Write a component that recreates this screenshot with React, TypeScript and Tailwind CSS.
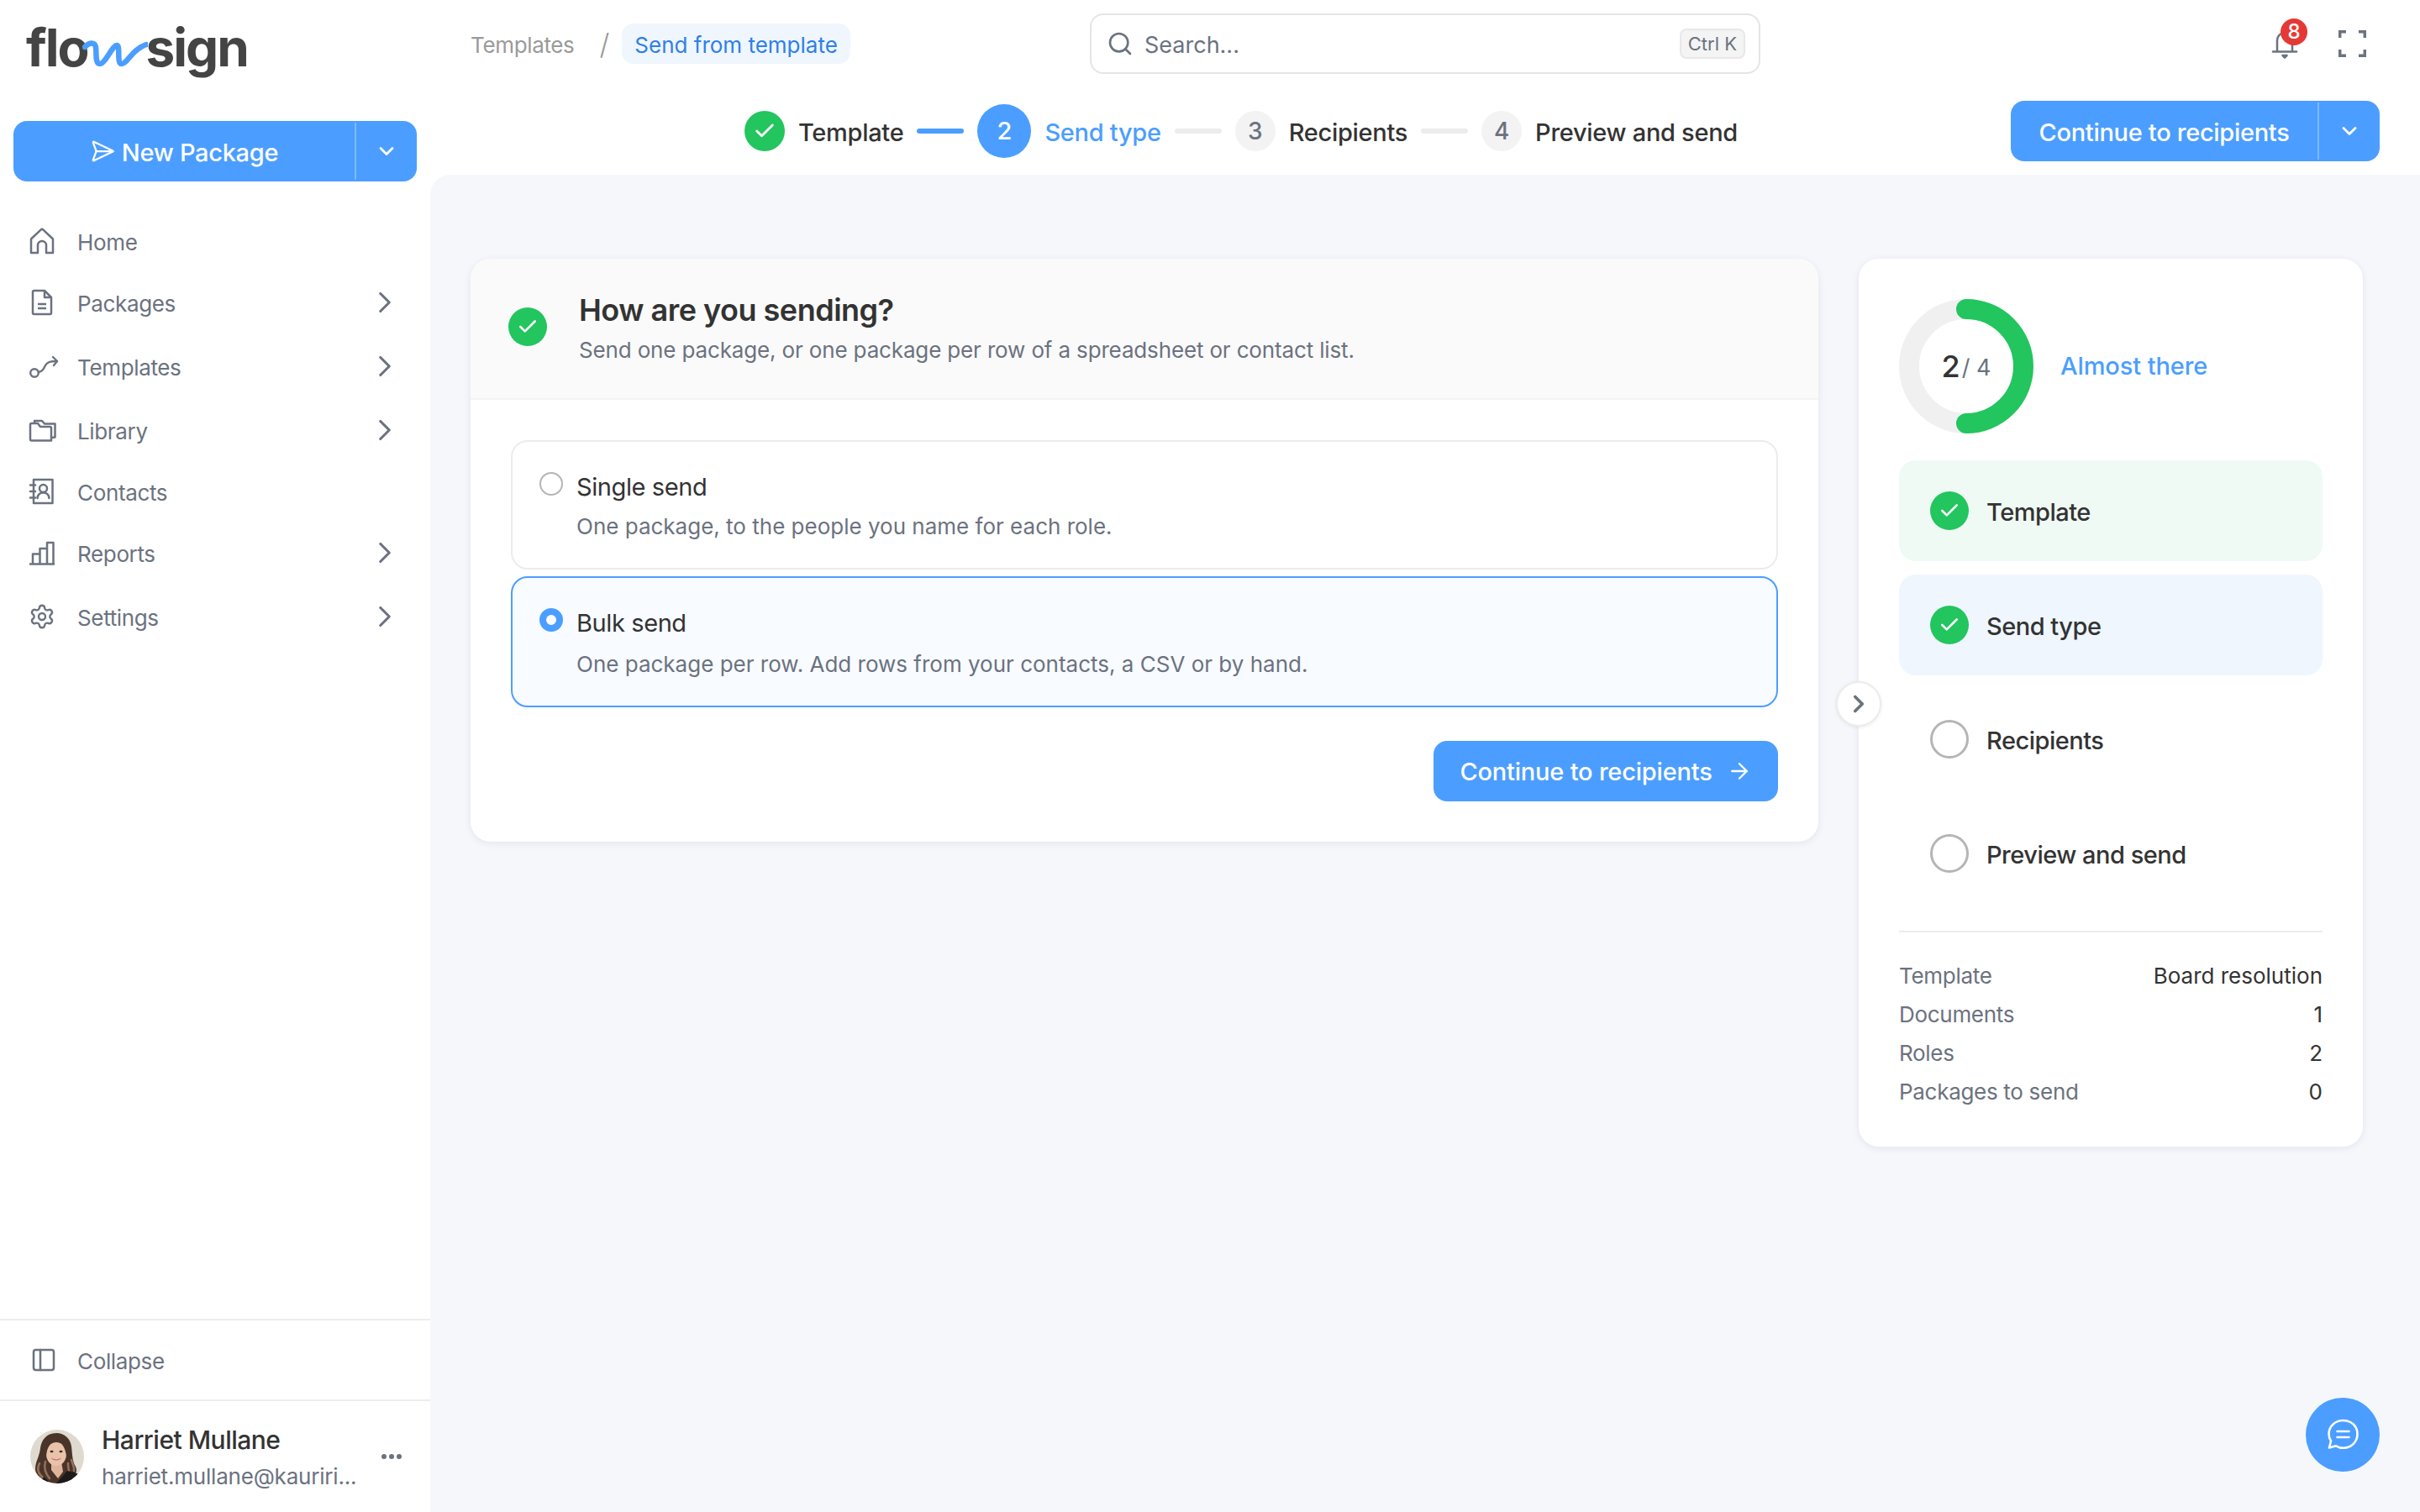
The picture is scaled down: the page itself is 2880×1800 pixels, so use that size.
import { ArrowRight, Check, ChevronDown, ChevronRight, PanelLeft, Search, SendHorizontal, Settings } from "lucide-react"
import type { ReactNode } from "react"

function HomeIcon() {
  return (
    <svg width="32" height="32" viewBox="0 0 32 32" fill="none" stroke="#6b7280" strokeWidth="2.5" strokeLinejoin="round">
      <path d="M3 13.5 14.5 2.6a2.2 2.2 0 0 1 3 0L29 13.5V30H21V21a5 5 0 0 0-10 0v9H3Z" />
    </svg>
  )
}

function PackageIcon() {
  return (
    <svg width="32" height="32" viewBox="0 0 32 32" fill="none" stroke="#6b7280" strokeWidth="2.5" strokeLinejoin="round">
      <path d="M5 3.5A1.5 1.5 0 0 1 6.500 2H19l8 8v18.500a1.500 1.500 0 0 1-1.500 1.500H6.500A1.500 1.500 0 0 1 5 28.500Z" />
      <path d="M19 2v8h8M11 18h10M11 23h10" />
    </svg>
  )
}

function RouteIcon() {
  return (
    <svg width="36" height="32" viewBox="0 0 36 32" fill="none" stroke="#6b7280" strokeWidth="2.4" strokeLinecap="round" strokeLinejoin="round">
      <circle cx="7" cy="24" r="4.800" />
      <path d="M12 23c5-1 6-4 8-8 2-3.500 5-5 14-5" />
      <path d="M29 5l5 5-4 5" />
    </svg>
  )
}

function FolderIcon() {
  return (
    <svg width="34" height="32" viewBox="0 0 34 32" fill="none" stroke="#6b7280" strokeWidth="2.5" strokeLinejoin="round">
      <path d="M2 9.500A1.500 1.500 0 0 1 3.500 8H11l3 4h11.500A1.500 1.500 0 0 1 27 13.500V28.500H3.500A1.500 1.500 0 0 1 2 27Z" />
      <path d="M7 8V5h9l3 3.500h12.500V24.500L27 25" />
    </svg>
  )
}

function ContactsIcon() {
  return (
    <svg width="32" height="32" viewBox="0 0 32 32" fill="none" stroke="#6b7280" strokeWidth="2.5" strokeLinecap="round" strokeLinejoin="round">
      <path d="M6 2h22.500v28H6Z" />
      <path d="M2 8.500h6M2 16h6M2 23.500h6" />
      <circle cx="17.500" cy="12.500" r="4.500" />
      <path d="M10.500 24c.5-4 3-6.500 7-6.500s6.500 2.500 7 6.500" />
    </svg>
  )
}

function BarsIcon() {
  return (
    <svg width="32" height="32" viewBox="0 0 32 32" fill="none" stroke="#6b7280" strokeWidth="2.5" strokeLinejoin="round">
      <path d="M1 29.500h30M5 29V17.500h8.500V29M13.500 29V11h8.500V29M22 29V4h7.500v25" />
    </svg>
  )
}

function BellIcon() {
  return (
    <svg width="32" height="38" viewBox="0 0 32 38" fill="none" stroke="#6b7280" strokeWidth="2.5" strokeLinecap="round" strokeLinejoin="round">
      <path d="M7 27V15a9 9 0 0 1 18 0v12" />
      <path d="M2 28.500h28" />
      <path d="M13.500 33h5l-2.500 2.500Z" fill="#6b7280" />
    </svg>
  )
}

function FullscreenIcon() {
  return (
    <svg width="33" height="32" viewBox="0 0 33 32" fill="none" stroke="#6b7280" strokeWidth="3.500">
      <path d="M1.700 9V1.700H9M24 1.700h7.300V9M31.300 23v7.300H24M9 30.300H1.700V23" />
    </svg>
  )
}

function ChatIcon() {
  return (
    <svg width="38" height="38" viewBox="0 0 38 38" fill="none" stroke="#ffffff" strokeWidth="2.600" strokeLinecap="round" strokeLinejoin="round">
      <path d="M19.500 2C10.500 2 2.500 8.500 2.500 18c0 3.500 1 6 2.500 8.500l-2 8 8-2.200c2.500 1.500 5.500 2.500 8.500 2.500 9.500 0 17-7 17-16.800S28.500 2 19.500 2Z" />
      <path d="M12.500 15h14M12.500 22h14" />
    </svg>
  )
}

function LogoWave() {
  return (
    <svg width="78" height="34" viewBox="0 0 78 34" fill="none" stroke="#4b9eff" strokeWidth="6.500" strokeLinecap="round" strokeLinejoin="round" className="relative -ml-[7px] -mr-[2px] mt-[25px] shrink-0">
      <path d="M3 10C7 5 15 3 16 10 17 18 15 30 21 30 27 30 36 8 41 8 46 8 40 30 47 30 53 30 60 12 76 7" />
    </svg>
  )
}

function Avatar() {
  return (
    <svg width="64" height="64" viewBox="0 0 64 64" className="shrink-0 rounded-full">
      <rect width="64" height="64" fill="#dedad0" />
      <path d="M31 4C19 4 13 13 12 22 11 32 6 38 6 47 6 54 14 60 22 64H44C53 57 57 50 54 44 50 38 50 28 49 20 48 11 41 4 31 4Z" fill="#4a342a" />
      <path d="M11 40c-3 6-2 12 4 17M18 38c-2 7 0 14 5 20M49 36c1 5 4 8 3 13M45 40c0 4 1 7 1 11" fill="none" stroke="#94705a" strokeWidth="2.500" strokeLinecap="round" />
      <path d="M25 38h12l2 12-6 8-8-10Z" fill="#e0b49c" />
      <ellipse cx="31" cy="29" rx="12" ry="14" fill="#e8c2a9" />
      <path d="M33 11C26 13 20 19 19 31 16 22 19 8 31 8 42 8 46 18 43 31 42 23 38 16 33 11Z" fill="#4a342a" />
      <path d="M31 64 44 49C50 50 58 52 62 56V64ZM24 64 16 56 12 64Z" fill="#1c1a1a" />
      <ellipse cx="25.500" cy="26" rx="2" ry="1.300" fill="#3b2a24" />
      <ellipse cx="36.500" cy="26" rx="2" ry="1.300" fill="#3b2a24" />
      <path d="M25 33.500c3 1.500 9 1.500 12 0-1 4-11 4-12 0Z" fill="#c9706f" />
      <path d="M26.500 34c2.500.8 6.500.8 9 0-1 1.500-8 1.500-9 0Z" fill="#f6eee9" />
    </svg>
  )
}

const navItems: { label: string; icon: ReactNode; hasChildren: boolean }[] = [
  { label: "Home", icon: <HomeIcon />, hasChildren: false },
  { label: "Packages", icon: <PackageIcon />, hasChildren: true },
  { label: "Templates", icon: <RouteIcon />, hasChildren: true },
  { label: "Library", icon: <FolderIcon />, hasChildren: true },
  { label: "Contacts", icon: <ContactsIcon />, hasChildren: false },
  { label: "Reports", icon: <BarsIcon />, hasChildren: true },
  { label: "Settings", icon: <Settings size={32} strokeWidth={1.8} color="#6b7280" />, hasChildren: true },
]

function SplitButton({ label, width, leading }: { label: string; width: string; leading?: ReactNode }) {
  return (
    <div className={`flex h-[72px] items-center rounded-[16px] bg-[#4b9eff] text-white ${width}`}>
      <div className="flex h-full flex-1 items-center justify-center gap-[8px] text-[29px] font-medium tracking-[-0.3px]">
        {leading}
        <span className="pt-[3px]">{label}</span>
      </div>
      <div className="h-[68px] w-[2px] bg-[#7db8ff]" />
      <div className="flex w-[72px] items-center justify-center">
        <ChevronDown size={28} strokeWidth={2.4} />
      </div>
    </div>
  )
}

function Sidebar() {
  return (
    <aside className="flex w-[512px] shrink-0 flex-col bg-white">
      <div className="flex h-[144px] items-start pl-[31px] pt-[21px] text-[62px] font-bold leading-[72px] tracking-[-2px] text-[#444444]">
        <span>flo</span>
        <LogoWave />
        <span className="relative">sign</span>
      </div>
      <div className="px-[16px]">
        <SplitButton label="New Package" width="w-[480px]" leading={<SendHorizontal size={30} strokeWidth={1.8} />} />
      </div>
      <nav className="mt-[36px] flex flex-col">
        {navItems.map((item) => (
          <div key={item.label} className={`flex items-center pl-[34px] pr-[33px] text-[26px] tracking-[-0.35px] text-[#6b7280] ${item.hasChildren ? "h-[76px]" : "h-[70px]"}`}>
            <span className="flex w-[58px] shrink-0 items-center">{item.icon}</span>
            <span className="flex-1 pt-[3px]">{item.label}</span>
            {item.hasChildren && <ChevronRight size={42} strokeWidth={1.8} color="#6b7280" />}
          </div>
        ))}
      </nav>
      <div className="flex-1" />
      <div className="flex h-[96px] items-center border-t-[2px] border-[#ededed] pl-[36px] text-[26px] tracking-[-0.35px] text-[#6b7280]">
        <span className="flex w-[56px]"><PanelLeft size={32} strokeWidth={1.9} /></span>
        <span className="pt-[3px]">Collapse</span>
      </div>
      <div className="flex h-[134px] items-center border-t-[2px] border-[#ededed] pl-[36px] pr-[34px]">
        <Avatar />
        <div className="ml-[21px] flex-1 pt-[2px]">
          <div className="text-[30px] font-medium leading-[38px] tracking-[-0.5px] text-[#333333]">Harriet Mullane</div>
          <div className="mt-[8px] text-[26px] leading-[34px] tracking-[-0.2px] text-[#6b7280]">harriet.mullane@kauriri...</div>
        </div>
        <div className="flex gap-[3px]">
          <span className="h-[6px] w-[6px] rounded-full bg-[#6b7280]" />
          <span className="h-[6px] w-[6px] rounded-full bg-[#6b7280]" />
          <span className="h-[6px] w-[6px] rounded-full bg-[#6b7280]" />
        </div>
      </div>
    </aside>
  )
}

function StepConnector({ active }: { active?: boolean }) {
  return <span className={`h-[6px] w-[56px] rounded-full ${active ? "bg-[#4b9eff]" : "bg-[#ececec]"}`} />
}

function GreenCheck({ size, icon }: { size: string; icon: number }) {
  return (
    <span className={`flex shrink-0 items-center justify-center rounded-full bg-[#22c55e] text-white ${size}`}>
      <Check size={icon} strokeWidth={2.4} />
    </span>
  )
}

function Stepper() {
  return (
    <div className="flex items-center gap-[16px] text-[29px] font-medium tracking-[-0.3px] text-[#333333]">
      <GreenCheck size="h-[48px] w-[48px]" icon={28} />
      <span className="pt-[3px]">Template</span>
      <StepConnector active />
      <span className="flex h-[64px] w-[64px] items-center justify-center rounded-full bg-[#4b9eff] text-white">2</span>
      <span className="pt-[3px] text-[#4b9eff]">Send type</span>
      <StepConnector />
      <span className="flex h-[48px] w-[48px] items-center justify-center rounded-full bg-[#f3f3f3] text-[28px] text-[#6b7280]">3</span>
      <span className="pt-[3px]">Recipients</span>
      <StepConnector />
      <span className="flex h-[48px] w-[48px] items-center justify-center rounded-full bg-[#f3f3f3] text-[28px] text-[#6b7280]">4</span>
      <span className="pt-[3px]">Preview and send</span>
    </div>
  )
}

function Header() {
  return (
    <header className="bg-white">
      <div className="flex h-[104px] items-center pl-[48px] pr-[64px]">
        <div className="flex w-[453px] items-center">
          <span className="pt-[3px] text-[26px] tracking-[-0.35px] text-[#9a9a9a]">Templates</span>
          <span className="ml-[30px] text-[34px] font-light text-[#9a9a9a]">/</span>
          <span className="ml-[15px] flex h-[48px] items-center rounded-[14px] bg-[#eff6fe] px-[15px] pt-[3px] text-[26px] text-[#2f7fe8]">Send from template</span>
        </div>
        <div className="ml-[284px] flex h-[72px] w-[798px] items-center rounded-[16px] border-[2px] border-[#e5e5e5] pl-[18px] pr-[16px]">
          <Search size={32} strokeWidth={2} color="#6b7280" />
          <span className="ml-[13px] flex-1 pt-[4px] text-[27px] text-[#6b7280]">Search...</span>
          <span className="flex h-[36px] items-center rounded-[8px] border-[2px] border-[#e8e8e8] bg-[#f4f4f4] px-[8px] text-[22px] text-[#6b7280]">Ctrl K</span>
        </div>
        <div className="ml-auto flex items-center gap-[48px]">
          <div className="relative flex h-[38px] w-[32px]">
            <BellIcon />
            <span className="absolute -top-[11px] left-[11px] flex h-[32px] w-[32px] items-center justify-center rounded-full bg-[#e53935] text-[24px] font-medium text-white">8</span>
          </div>
          <FullscreenIcon />
        </div>
      </div>
      <div className="flex h-[104px] items-center pl-[374px] pr-[48px]">
        <Stepper />
        <div className="ml-auto">
          <SplitButton label="Continue to recipients" width="w-[439px]" />
        </div>
      </div>
    </header>
  )
}

function SendOption({ title, description, selected }: { title: string; description: string; selected?: boolean }) {
  return (
    <div className={`flex gap-[16px] rounded-[20px] border-[2px] pl-[32px] pt-[36px] ${selected ? "h-[156px] border-[#4b9eff] bg-[#f8fbff]" : "h-[154px] border-[#ececec] bg-white"}`}>
      <span className={`h-[28px] w-[28px] shrink-0 rounded-full ${selected ? "border-[8px] border-[#4b9eff] bg-white" : "border-[2px] border-[#b5b5b5] bg-white"}`} />
      <div className="-mt-[1px]">
        <div className="text-[29px] leading-[38px] tracking-[-0.4px] text-[#333333]">{title}</div>
        <div className={`text-[26px] leading-[36px] text-[#6b7280] ${selected ? "mt-[12px]" : "mt-[10px]"}`}>{description}</div>
      </div>
    </div>
  )
}

function SendingCard() {
  return (
    <section className="w-[1604px] overflow-hidden rounded-[24px] bg-white shadow-[0_2px_10px_rgba(20,30,60,0.08)]">
      <div className="flex h-[168px] items-center gap-[38px] border-b-[2px] border-[#f3f3f3] bg-[#fafafa] pl-[45px]">
        <GreenCheck size="h-[46px] w-[46px] -mt-[4px]" icon={26} />
        <div>
          <div className="text-[36px] font-semibold leading-[44px] tracking-[-0.5px] text-[#333333]">How are you sending?</div>
          <div className="mt-[8px] text-[26px] leading-[36px] tracking-[-0.15px] text-[#6b7280]">Send one package, or one package per row of a spreadsheet or contact list.</div>
        </div>
      </div>
      <div className="flex flex-col p-[48px]">
        <SendOption title="Single send" description="One package, to the people you name for each role." />
        <div className="h-[8px]" />
        <SendOption title="Bulk send" description="One package per row. Add rows from your contacts, a CSV or by hand." selected />
        <div className="mt-[40px] flex justify-end">
          <div className="flex h-[72px] w-[410px] items-center justify-center gap-[17px] rounded-[16px] bg-[#4b9eff] text-[29px] font-medium tracking-[-0.2px] text-white">
            <span className="pt-[1px]">Continue to recipients</span>
            <ArrowRight size={30} strokeWidth={1.9} />
          </div>
        </div>
      </div>
    </section>
  )
}

const progressRows = [
  { label: "Template", done: true, bg: "bg-[#f0faf5]" },
  { label: "Send type", done: true, bg: "bg-[#eff6fe]" },
  { label: "Recipients", done: false, bg: "" },
  { label: "Preview and send", done: false, bg: "" },
]

const summaryRows = [
  ["Template", "Board resolution"],
  ["Documents", "1"],
  ["Roles", "2"],
  ["Packages to send", "0"],
]

function ProgressCard() {
  return (
    <section className="relative w-[600px] rounded-[24px] bg-white px-[48px] pb-[43px] pt-[48px] shadow-[0_2px_10px_rgba(20,30,60,0.08)]">
      <button className="absolute -left-[27px] top-[503px] flex h-[54px] w-[54px] items-center justify-center rounded-full border-[2px] border-[#ececec] bg-white text-[#6b7280] shadow-[0_1px_4px_rgba(0,0,0,0.08)]">
        <ChevronRight size={34} strokeWidth={2.6} />
      </button>
      <div className="flex items-center gap-[32px]">
        <div className="relative flex h-[160px] w-[160px] items-center justify-center">
          <svg width="160" height="160" viewBox="0 0 160 160" fill="none" className="absolute inset-0">
            <circle cx="80" cy="80" r="68" stroke="#f0f0f0" strokeWidth="24" />
            <path d="M80 12a68 68 0 0 1 0 136" stroke="#22c55e" strokeWidth="24" strokeLinecap="round" />
          </svg>
          <span className="relative text-[36px] font-medium text-[#333333]">2</span>
          <span className="relative ml-[2px] mt-[4px] text-[27px] text-[#6b7280]">/ 4</span>
        </div>
        <span className="text-[29px] font-medium tracking-[-0.1px] text-[#4b9eff]">Almost there</span>
      </div>
      <div className="mt-[32px] flex flex-col gap-[16px]">
        {progressRows.map((row) => (
          <div key={row.label} className={`flex h-[120px] items-center gap-[21px] rounded-[20px] pl-[37px] ${row.bg}`}>
            {row.done ? (
              <GreenCheck size="h-[46px] w-[46px]" icon={26} />
            ) : (
              <span className="h-[46px] w-[46px] rounded-full border-[3px] border-[#b5b5b5]" />
            )}
            <span className="pt-[4px] text-[29px] font-medium tracking-[-0.5px] text-[#333333]">{row.label}</span>
          </div>
        ))}
      </div>
      <div className="mt-[32px] border-t-[2px] border-[#ececec] pt-[28px]">
        {summaryRows.map(([label, value]) => (
          <div key={label} className="flex h-[46px] items-center justify-between text-[26px]">
            <span className="tracking-[-0.3px] text-[#6b7280]">{label}</span>
            <span className="text-[#333333]">{value}</span>
          </div>
        ))}
      </div>
    </section>
  )
}

export default function App() {
  return (
    <div className="flex h-[1800px] w-[2880px] overflow-hidden bg-white [font-family:Inter,sans-serif]">
      <Sidebar />
      <div className="flex min-w-0 flex-1 flex-col">
        <Header />
        <main className="relative flex flex-1 items-start gap-[48px] rounded-tl-[24px] bg-[#f5f7fb] pl-[48px] pt-[100px]">
          <SendingCard />
          <ProgressCard />
          <button className="absolute bottom-[48px] right-[48px] flex h-[88px] w-[88px] items-center justify-center rounded-full bg-[#4b9eff]">
            <ChatIcon />
          </button>
        </main>
      </div>
    </div>
  )
}
